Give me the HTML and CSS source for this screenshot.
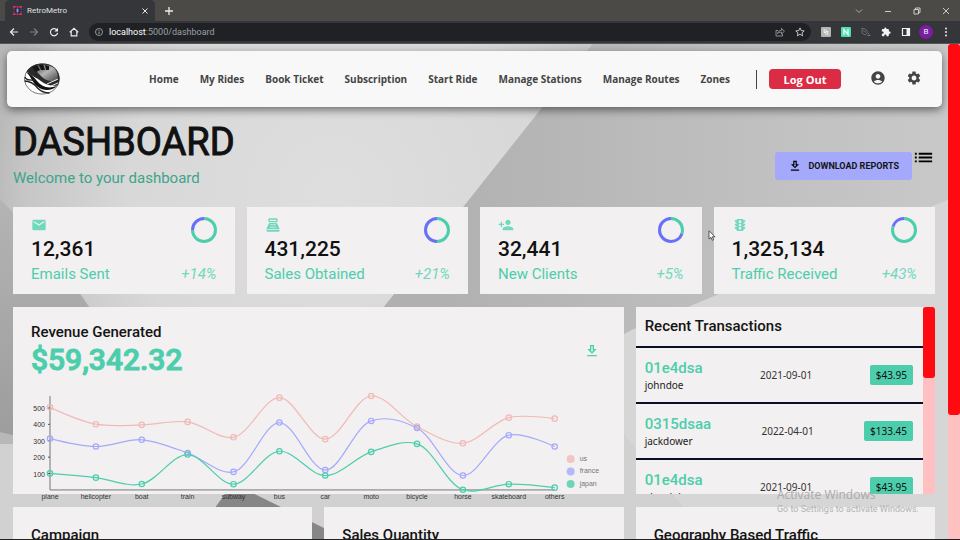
FILE: index.html
```html
<!DOCTYPE html>
<html lang="en">
<head>
<meta charset="utf-8">
<title>RetroMetro</title>
<link rel="stylesheet" href="styles.css">
</head>
<body>
<div class="browser">
  <div class="tabstrip">
    <div class="tab">
      <svg class="favicon" viewBox="0 0 10 10"><rect width="10" height="10" rx="1" fill="#1c2f55"/><g fill="none" stroke="#e8304f" stroke-width="2"><path d="M0 1h3M4 1h2M7 1h3M0 9h3M4 9h2M7 9h3M1 3v1M1 6v1M9 3v1M9 6v1"/></g><rect x="4" y="3" width="2" height="4" fill="#8fa3c4"/></svg>
      <span class="tab-title">RetroMetro</span>
      <button class="chrome-btn" aria-label="Close tab"><svg class="ic8" viewBox="0 0 8 8"><path d="M1.500 1.500l5 5M6.500 1.500l-5 5" stroke="#e8e8e8" fill="none"/></svg></button>
    </div>
    <button class="chrome-btn newtab" aria-label="New tab"><svg class="ic8" viewBox="0 0 8 8"><path d="M4 0v8M0 4h8" stroke="#eee" stroke-width="1.300" fill="none"/></svg></button>
    <div class="window-buttons">
      <button class="chrome-btn" aria-label="Search tabs"><svg class="ic8" viewBox="0 0 8 8"><path d="M1 2.500l3 3 3-3" stroke="#aaa" fill="none"/></svg></button>
      <button class="chrome-btn" aria-label="Minimize"><svg class="ic8" viewBox="0 0 8 8"><path d="M1 4.500h6" stroke="#ccc" fill="none"/></svg></button>
      <button class="chrome-btn" aria-label="Restore"><svg class="ic8" viewBox="0 0 8 8"><path d="M1 2.500h4.500v4.500H1zM2.500 2.500V1H7v4.500H5.500" stroke="#ccc" fill="none"/></svg></button>
      <button class="chrome-btn" aria-label="Close"><svg class="ic8" viewBox="0 0 8 8"><path d="M1 1l6 6M7 1L1 7" stroke="#ccc" fill="none"/></svg></button>
    </div>
  </div>
  <div class="toolbar">
    <button class="chrome-btn" aria-label="Back"><svg class="ic10" viewBox="0 0 10 10"><path d="M9 5H1.500M5 1.500L1.500 5 5 8.500" stroke="#e8eaed" stroke-width="1.200" fill="none"/></svg></button>
    <button class="chrome-btn" aria-label="Forward"><svg class="ic10" viewBox="0 0 10 10"><path d="M1 5h7.500M5 1.500L8.500 5 5 8.500" stroke="#7d7e81" stroke-width="1.200" fill="none"/></svg></button>
    <button class="chrome-btn" aria-label="Reload"><svg class="ic10" viewBox="0 0 10 10"><path d="M8.200 3.400A3.600 3.600 0 1 0 8.600 5.800" stroke="#e8eaed" stroke-width="1.200" fill="none"/><path d="M9 .8v3.700H5.300z" fill="#e8eaed"/></svg></button>
    <button class="chrome-btn" aria-label="Home"><svg class="ic10" viewBox="0 0 10 10"><path d="M.8 5.200L5 1.400l4.200 3.800M2.200 4.500v4.300h5.600V4.500" stroke="#e8eaed" stroke-width="1.200" fill="none"/></svg></button>
    <div class="omnibox">
      <svg class="ic8" viewBox="0 0 8 8"><circle cx="4" cy="4" r="3.500" fill="none" stroke="#b5b7ba" stroke-width=".8"/><path d="M4 3.500v2.500M4 2v.8" stroke="#b5b7ba" stroke-width=".9"/></svg>
      <span class="url"><b>localhost</b>:5000/dashboard</span>
      <svg class="ic10" viewBox="0 0 10 10"><path d="M3 3.500H1v5.500h6.500V7M2.500 6.500C3 4.500 4.500 3.400 6.500 3.400V1.400L9.400 4.200 6.500 7V5.200C4.800 5.200 3.500 5.500 2.500 6.500z" fill="none" stroke="#a5a7aa" stroke-width=".8"/></svg>
      <svg class="ic10" viewBox="0 0 10 10"><path d="M5 .9l1.200 2.700 3 .3-2.200 2 .6 2.900L5 7.300 2.400 8.800 3 5.900.8 3.900l3-.3z" fill="none" stroke="#d0d2d5" stroke-width=".9"/></svg>
    </div>
    <div class="extensions">
      <svg class="ic10" viewBox="0 0 10 10"><rect width="10" height="10" rx="1" fill="#b4b4b4"/><path d="M3.200 2v3.800M5 2.500v5.500M3 5.500h2M6.800 4v4M5 4.500h1.800" stroke="#eee" stroke-width="1" fill="none"/></svg>
      <svg class="ic10" viewBox="0 0 10 10"><rect width="10" height="10" rx="1" fill="#4fe0b0"/><path d="M3 7.700V2.700l4 4.700V2.300" stroke="#fff" stroke-width="1.300" fill="none"/></svg>
      <svg class="ic10" viewBox="0 0 10 10"><path d="M1 1l4 1.500 1.500 3-2.500 2.500-3-2zM2 3.500l3 2M6 8.500h3.500M7 6l1.500 2" stroke="#707276" stroke-width=".9" fill="none"/></svg>
      <svg class="ic10" viewBox="0 0 24 24"><path fill="#f1f3f4" d="M20.500 11H19V7c0-1.100-.9-2-2-2h-4V3.500C13 2.120 11.880 1 10.500 1S8 2.120 8 3.500V5H4c-1.100 0-1.990.9-1.990 2v3.800H3.500c1.490 0 2.700 1.210 2.700 2.700s-1.210 2.700-2.700 2.700H2V20c0 1.100.9 2 2 2h3.800v-1.500c0-1.490 1.210-2.700 2.700-2.700s2.700 1.210 2.700 2.700V22H17c1.100 0 2-.9 2-2v-4h1.500c1.380 0 2.500-1.120 2.500-2.500S21.880 11 20.500 11z"/></svg>
      <svg class="ic10" viewBox="0 0 10 10"><path d="M1.500 1.500h7v7h-7z" stroke="#f1f3f4" stroke-width="1.200" fill="none"/><path d="M5.500 1.500h3v7h-3z" fill="#f1f3f4"/></svg>
      <span class="profile">B</span>
      <svg class="ic10" viewBox="0 0 10 10"><g fill="#e8eaed"><circle cx="5" cy="1.500" r="1"/><circle cx="5" cy="5" r="1"/><circle cx="5" cy="8.500" r="1"/></g></svg>
    </div>
  </div>

  <div class="viewport">
    <svg class="backdrop" viewBox="0 0 948 495" preserveAspectRatio="none" aria-hidden="true">
      <defs>
        <radialGradient id="light" gradientUnits="userSpaceOnUse" cx="330" cy="150" r="340"><stop offset="0" stop-color="#dedede"/><stop offset=".6" stop-color="#d8d8d8"/><stop offset=".9" stop-color="#c6c6c6"/><stop offset="1" stop-color="#b8b8b8"/></radialGradient>
        <linearGradient id="mid" gradientUnits="userSpaceOnUse" x1="420" y1="100" x2="948" y2="100"><stop offset="0" stop-color="#b0b0b0"/><stop offset=".5" stop-color="#bdbdbd"/><stop offset="1" stop-color="#c9c9c9"/></linearGradient>
        <linearGradient id="dim" x1="0" y1="0" x2="0" y2="1"><stop offset="0" stop-color="#b4b4b4"/><stop offset="1" stop-color="#9c9c9c"/></linearGradient>
      </defs>
      <rect width="948" height="495" fill="#d1d1d1"/>
      <path d="M0 0H585L370 277 300 400H0z" fill="url(#light)"/>
      <path d="M585 0H948V151L624 286 560 320 350 300z" fill="url(#mid)"/>
      <path d="M948 151V495H700L560 320 624 286z" fill="#d6d6d6"/>
      <path d="M0 155L12 168 80 251 180 400 12 391 0 388z" fill="url(#dim)"/>
      <path d="M225 446H243L324 486V495H190z" fill="#868686"/>
    </svg>

    <div class="page">
      <header class="navbar">
        <a class="logo" href="#" aria-label="RetroMetro">
          <svg viewBox="0 0 38 34"><defs><linearGradient id="train" x1="0" y1="0" x2="1" y2="1"><stop offset="0" stop-color="#333"/><stop offset=".5" stop-color="#b5b5b5"/><stop offset="1" stop-color="#444"/></linearGradient></defs>
            <ellipse cx="19" cy="17" rx="17.500" ry="15" fill="#fff" stroke="#555" stroke-width=".8"/>
            <path d="M3.500 9.500C7 4 13 1.500 20 1.500c9 0 16 6 16.500 14 0 4-1 6-2 8-6 1-12-1-16-4C14 16 9 14 3.500 9.500z" fill="#2a2a2a"/>
            <path d="M10 5c7-4 16-3 21 1 4 4 5 9 2 13-4 1-10 0-14-4-3-3-6-6-9-10z" fill="url(#train)"/>
            <path d="M9 5l5-2 3 5-4 2zM16 3l4-1 2 6-4 0zM22 3l4 1 0 4-3 0z" fill="#151515"/>
            <path d="M3 10c4 1 8 5 11 9 5 6 11 8 20 5-5 5-14 5-19 1C9 21 9 15 3 10z" fill="#111"/>
            <path d="M2 15c1 4 6 3 10 3M1.500 19c5 0 9 2 13 7 4 4 8 5 12 5" fill="none" stroke="#222" stroke-width="1.300"/>
            <path d="M24 22l11-5M28 24l7-3" stroke="#eee" stroke-width="1" fill="none"/>
          </svg>
        </a>
        <nav class="links">
          <a href="#">Home</a><a href="#">My Rides</a><a href="#">Book Ticket</a><a href="#">Subscription</a><a href="#">Start Ride</a><a href="#">Manage Stations</a><a href="#">Manage Routes</a><a href="#">Zones</a>
        </nav>
        <span class="divider"></span>
        <button class="logout">Log Out</button>
        <div class="nav-icons">
          <button class="icon-btn" aria-label="Account"><svg viewBox="0 0 24 24"><path d="M12 2C6.480 2 2 6.480 2 12s4.480 10 10 10 10-4.480 10-10S17.520 2 12 2zm0 4c1.930 0 3.500 1.570 3.500 3.500S13.930 13 12 13s-3.500-1.570-3.500-3.500S10.070 6 12 6zm0 14c-2.030 0-4.430-.82-6.140-2.880C7.550 15.800 9.680 15 12 15s4.450.8 6.140 2.120C16.430 19.180 14.030 20 12 20z"/></svg></button>
          <button class="icon-btn" aria-label="Settings"><svg viewBox="0 0 24 24"><path d="M19.140 12.940c.04-.3.06-.61.06-.94 0-.32-.02-.64-.07-.94l2.030-1.580c.18-.14.23-.41.12-.61l-1.920-3.320c-.12-.22-.37-.29-.59-.22l-2.390.96c-.5-.38-1.030-.7-1.620-.94l-.36-2.540c-.04-.24-.24-.41-.48-.41h-3.840c-.24 0-.43.17-.47.41l-.36 2.540c-.59.24-1.130.57-1.620.94l-2.390-.96c-.22-.08-.47 0-.59.22L2.740 8.870c-.12.21-.08.47.12.61l2.030 1.580c-.05.3-.09.63-.09.94s.02.64.07.94l-2.030 1.580c-.18.14-.23.41-.12.61l1.920 3.320c.12.22.37.29.59.22l2.390-.96c.5.38 1.030.7 1.620.94l.36 2.540c.05.24.24.41.48.41h3.840c.24 0 .44-.17.47-.41l.36-2.540c.59-.24 1.130-.56 1.620-.94l2.390.96c.22.08.47 0 .59-.22l1.920-3.320c.12-.22.07-.47-.12-.61l-2.010-1.580zM12 15.600c-1.980 0-3.600-1.620-3.600-3.600s1.620-3.600 3.600-3.600 3.600 1.620 3.600 3.600-1.620 3.600-3.600 3.600z"/></svg></button>
        </div>
      </header>

      <main class="content">
        <div class="heading">
          <div>
            <h1>DASHBOARD</h1>
            <p class="welcome">Welcome to your dashboard</p>
          </div>
          <div class="heading-actions">
            <button class="download"><svg viewBox="0 0 24 24"><path d="M19 9h-4V3H9v6H5l7 7 7-7zm-8 2V5h2v6h1.170L12 13.170 9.830 11H11zm-6 7h14v2H5z"/></svg>DOWNLOAD REPORTS</button>
            <button class="menu-btn" aria-label="Menu"><svg viewBox="0 0 24 24"><path d="M3 13h2v-2H3v2zm0 4h2v-2H3v2zm0-8h2V7H3v2zm4 4h14v-2H7v2zm0 4h14v-2H7v2zM7 7v2h14V7H7z"/></svg></button>
          </div>
        </div>

        <div class="grid">
          <section class="card stat">
            <div class="stat-row">
              <div><svg class="stat-icon" viewBox="0 0 24 24"><path d="M20 4H4c-1.100 0-1.990.9-1.990 2L2 18c0 1.100.9 2 2 2h16c1.100 0 2-.9 2-2V6c0-1.100-.9-2-2-2zm0 4l-8 5-8-5V6l8 5 8-5v2z"/></svg><h2>12,361</h2></div>
              <svg class="ring" viewBox="0 0 26 26"><circle cx="13" cy="13" r="11.500" pathLength="100" class="ring-base" stroke-dasharray="0 75 25"/><circle cx="13" cy="13" r="11.500" pathLength="100" class="ring-part" stroke-dasharray="75 100"/></svg>
            </div>
            <div class="stat-row stat-foot"><span>Emails Sent</span><em>+14%</em></div>
          </section>
          <section class="card stat">
            <div class="stat-row">
              <div><svg class="stat-icon" viewBox="0 0 24 24"><path fill-rule="evenodd" d="M17 2H7c-1.100 0-2 .9-2 2v2c0 1.100.9 2 2 2h10c1.100 0 2-.9 2-2V4c0-1.100-.9-2-2-2zm0 4H7V4h10v2zm3 16H4c-1.100 0-2-.9-2-2v-1h20v1c0 1.100-.9 2-2 2zm-1.470-11.810C18.210 9.470 17.490 9 16.700 9H7.300c-.79 0-1.510.47-1.830 1.190L2 18h20l-3.470-7.810zM8 11h2v1H8zM11 11h2v1h-2zM14 11h2v1h-2zM8 13h2v1H8zM11 13h2v1h-2zM14 13h2v1h-2zM8 15h2v1H8zM11 15h2v1h-2zM14 15h2v1h-2z"/></svg><h2>431,225</h2></div>
              <svg class="ring" viewBox="0 0 26 26"><circle cx="13" cy="13" r="11.500" pathLength="100" class="ring-base" stroke-dasharray="0 50 50"/><circle cx="13" cy="13" r="11.500" pathLength="100" class="ring-part" stroke-dasharray="50 100"/></svg>
            </div>
            <div class="stat-row stat-foot"><span>Sales Obtained</span><em>+21%</em></div>
          </section>
          <section class="card stat">
            <div class="stat-row">
              <div><svg class="stat-icon" viewBox="0 0 24 24"><path d="M15 12c2.210 0 4-1.790 4-4s-1.790-4-4-4-4 1.790-4 4 1.790 4 4 4zm-9-2V7H4v3H1v2h3v3h2v-3h3v-2H6zm9 4c-2.670 0-8 1.340-8 4v2h16v-2c0-2.660-5.330-4-8-4z"/></svg><h2>32,441</h2></div>
              <svg class="ring" viewBox="0 0 26 26"><circle cx="13" cy="13" r="11.500" pathLength="100" class="ring-base" stroke-dasharray="0 30 70"/><circle cx="13" cy="13" r="11.500" pathLength="100" class="ring-part" stroke-dasharray="30 100"/></svg>
            </div>
            <div class="stat-row stat-foot"><span>New Clients</span><em>+5%</em></div>
          </section>
          <section class="card stat">
            <div class="stat-row">
              <div><svg class="stat-icon" viewBox="0 0 24 24"><path d="M20 10h-3V8.860c1.720-.45 3-2 3-3.860h-3V4c0-.55-.45-1-1-1H8c-.55 0-1 .45-1 1v1H4c0 1.860 1.280 3.410 3 3.860V10H4c0 1.860 1.280 3.410 3 3.860V15H4c0 1.860 1.280 3.410 3 3.860V20c0 .55.45 1 1 1h8c.55 0 1-.45 1-1v-1.140c1.720-.45 3-2 3-3.860h-3v-1.140c1.720-.45 3-2 3-3.860zm-8 9c-1.110 0-2-.9-2-2s.89-2 2-2c1.100 0 2 .9 2 2s-.89 2-2 2zm0-5c-1.110 0-2-.9-2-2s.89-2 2-2c1.100 0 2 .9 2 2s-.89 2-2 2zm0-5c-1.110 0-2-.9-2-2s.89-2 2-2c1.100 0 2 .89 2 2s-.89 2-2 2z"/></svg><h2>1,325,134</h2></div>
              <svg class="ring" viewBox="0 0 26 26"><circle cx="13" cy="13" r="11.500" pathLength="100" class="ring-base" stroke-dasharray="0 80 20"/><circle cx="13" cy="13" r="11.500" pathLength="100" class="ring-part" stroke-dasharray="80 100"/></svg>
            </div>
            <div class="stat-row stat-foot"><span>Traffic Received</span><em>+43%</em></div>
          </section>

          <section class="card revenue">
            <div class="revenue-head">
              <div><h3>Revenue Generated</h3><p class="amount">$59,342.32</p></div>
              <button class="save" aria-label="Download chart"><svg viewBox="0 0 24 24"><path d="M19 9h-4V3H9v6H5l7 7 7-7zm-8 2V5h2v6h1.170L12 13.170 9.830 11H11zm-6 7h14v2H5z"/></svg></button>
            </div>
            <svg class="chart" id="chart" viewBox="0 0 611 116" role="img" aria-label="Revenue by transport"></svg>
          </section>

          <section class="card transactions">
            <div class="list">
              <h3>Recent Transactions</h3>
              <div class="txn"><div><strong>01e4dsa</strong><span>johndoe</span></div><time>2021-09-01</time><b class="price">$43.95</b></div>
              <div class="txn"><div><strong>0315dsaa</strong><span>jackdower</span></div><time>2022-04-01</time><b class="price">$133.45</b></div>
              <div class="txn"><div><strong>01e4dsa</strong><span>aberdohnny</span></div><time>2021-09-01</time><b class="price">$43.95</b></div>
            </div>
            <div class="track"><div class="thumb thumb-list"></div></div>
          </section>

          <section class="card small"><h3>Campaign</h3></section>
          <section class="card small"><h3>Sales Quantity</h3></section>
          <section class="card small"><h3>Geography Based Traffic</h3></section>
        </div>
      </main>
    </div>
    <div class="track"><div class="thumb thumb-page"></div></div>
  </div>
</div>
<div class="watermark"><p class="wm-title">Activate Windows</p><p>Go to Settings to activate Windows.</p></div>
<svg class="cursor" viewBox="0 0 8 12" aria-hidden="true"><path d="M1 .8v8.200l2-1.700 1.300 3 1.300-.6-1.300-2.900H7z" fill="#fff" stroke="#333" stroke-width=".8"/></svg>
<script src="chart.js"></script>
</body>
</html>
```
FILE: styles.css
```css
* { box-sizing: border-box; }
body { margin: 0; font-family: Roboto, sans-serif; color: #111; overflow: hidden; background: #35363a; }
h1, h2, h3, p { margin: 0; font-weight: 500; }
button { border: 0; padding: 0; background: none; font: inherit; color: inherit; cursor: pointer; }
svg { display: block; flex: none; }
a { color: inherit; text-decoration: none; }

.browser { display: flex; flex-direction: column; height: 100vh; border-bottom: 1px solid #222; }
.chrome-btn { display: flex; }
.ic8 { width: 8px; height: 8px; }
.ic10 { width: 10px; height: 10px; }

.tabstrip { display: flex; align-items: center; height: 21px; padding-left: 5px; background: #4b4a47; }
.tab { display: flex; align-items: center; gap: 5px; width: 150px; height: 21px; padding: 0 6px 0 8px; border-radius: 5px 5px 0 0; background: #35363a; color: #dfe1e5; }
.favicon { width: 9px; height: 9px; }
.tab-title { flex: 1; font-size: 8px; }
.newtab { margin-left: 10px; }
.window-buttons { display: flex; gap: 21px; margin-left: auto; padding-right: 10px; }

.toolbar { display: flex; align-items: center; gap: 10px; height: 23px; padding: 0 9px; background: #35363a; border-bottom: 1px solid #55565a; }
.omnibox { flex: 1; display: flex; align-items: center; gap: 10px; height: 18px; padding: 0 6px; border-radius: 9px; background: #202124; }
.url { flex: 1; margin-left: -4px; font-size: 9px; color: #9aa0a6; }
.url b { font-weight: 400; color: #fff; }
.extensions { display: flex; align-items: center; gap: 10px; }
.profile { width: 14px; height: 14px; margin: 0 -2px; border-radius: 50%; background: #7b1fa2; color: #eee; font-size: 8px; line-height: 14px; text-align: center; }

.viewport { position: relative; flex: 1; min-height: 0; display: flex; overflow: hidden; background: #d1d1d1; }
.backdrop { position: absolute; inset: 0; width: 100%; height: 100%; }
.page { position: relative; flex: 1; min-width: 0; }
.track { position: relative; flex: none; width: 12px; background: #ffc0c2; }
.thumb { border-radius: 3px; background: #ff0a10; }
.thumb-page { height: 75%; }
.thumb-list { height: 38%; }

.navbar { display: flex; align-items: center; height: 56px; margin: 7px 6px 0 7px; padding: 0 20px 0 16px; border-radius: 5px; background: #f8f8f8; box-shadow: 0 3px 8px rgba(0, 0, 0, .5); color: #444; }
.logo svg { width: 38px; height: 34px; }
.links { display: flex; gap: 21px; margin-left: auto; font: 700 10px "Open Sans", sans-serif; }
.divider { width: 1px; height: 19px; margin: 0 12px 0 26px; background: #444; }
.logout { width: 72px; height: 20px; border-radius: 4px; background: #dc2c45; color: #fff; font: 700 11px "Open Sans", sans-serif; }
.nav-icons { display: flex; gap: 20px; margin-left: 29px; padding-bottom: 3px; }
.icon-btn svg { width: 16px; height: 16px; fill: #444; }

.content { padding: 11px 13px 0; }
.heading { display: flex; justify-content: space-between; height: 89px; }
h1 { font-size: 38px; line-height: 49px; -webkit-text-stroke: 1px; font-weight: 400; }
.welcome { margin-top: 1px; font-size: 15px; line-height: 20px; font-weight: 400; color: #3da58a; }
.heading-actions { display: flex; align-items: flex-start; padding-top: 34px; }
.download { display: flex; align-items: center; gap: 7px; height: 28px; padding: 0 13px; border-radius: 3px; background: #a4a9fc; color: #141414; font-size: 9px; font-weight: 700; }
.download svg { width: 14px; height: 14px; }
.menu-btn svg { width: 23px; height: 23px; margin: -6px 0 0; }

.grid { display: grid; grid-template-columns: repeat(12, minmax(0, 1fr)); gap: 13px 12px; }
.card { background: #f2f0f0; }
h3 { font-size: 15px; line-height: 18px; color: #141414; }

.stat { grid-column: span 3; height: 87px; padding: 10px 18px 0; }
.stat-row { display: flex; justify-content: space-between; }
.stat-icon { width: 16px; height: 16px; fill: #70d8bd; }
.stat h2 { font-size: 21px; line-height: 32px; color: #111; }
.ring { width: 26px; height: 26px; fill: none; stroke-width: 3; }
.ring circle { transform: rotate(-90deg); transform-origin: 50% 50%; }
.ring-base { stroke: #6870fa; }
.ring-part { stroke: #4cceac; }
.stat-foot { font-size: 15px; line-height: 18px; color: #4cceac; }
.stat-foot em { color: #70d8bd; }

.revenue { grid-column: span 8; height: 187px; padding-top: 16px; }
.revenue-head { display: flex; justify-content: space-between; align-items: center; padding: 0 24px 0 18px; }
.amount { font-size: 30px; line-height: 37px; color: #4cceac; -webkit-text-stroke: 1px; }
.save svg { width: 16px; height: 16px; fill: #4cceac; }
.chart { width: 100%; height: auto; margin-top: 12px; overflow: visible; }
.chart text { font: 7px "Liberation Sans", sans-serif; fill: #333; }
.chart .legend { fill: #777; }

.transactions { grid-column: span 4; display: flex; height: 187px; overflow: hidden; }
.list { flex: 1; }
.list h3 { padding: 10px 9px 11px; border-bottom: 2px solid #0a0f28; }
.txn { display: flex; align-items: center; justify-content: space-between; height: 56px; padding: 0 10px 0 9px; border-bottom: 2px solid #0a0f28; }
.txn div { display: flex; flex-direction: column; }
.txn strong { font-size: 15px; line-height: 19px; font-weight: 500; color: #4cceac; }
.txn span { font: 10px/14px "Noto Sans", sans-serif; color: #222; }
.txn time { font: 10px/14px "Noto Sans", sans-serif; color: #333; }
.price { padding: 3px 6px; border-radius: 2px; background: #4cceac; font: 10px/14px "Noto Sans", sans-serif; color: #111; }

.small { grid-column: span 4; height: 187px; padding: 19px 18px; }

.watermark { position: absolute; right: 41px; bottom: 24px; font-size: 9px; line-height: 13px; color: #b4b4b4; pointer-events: none; }
.watermark p { font-weight: 400; }
.watermark .wm-title { font: 12px/17px "Open Sans", sans-serif; color: #aaa; }
.cursor { position: absolute; left: 708px; top: 230px; width: 8px; height: 12px; }
```
FILE: chart.js
```js
const modes = ["plane", "helicopter", "boat", "train", "subway", "bus", "car", "moto", "bicycle", "horse", "skateboard", "others"];
const series = [
  { name: "japan", color: "#4cceac", values: [101, 75, 36, 216, 35, 236, 88, 232, 281, 1, 35, 14] },
  { name: "france", color: "#a4a9fc", values: [212, 190, 270, 9, 75, 175, 33, 189, 97, 87, 299, 251] },
  { name: "us", color: "#f1b9b7", values: [191, 136, 91, 190, 211, 152, 189, 152, 8, 197, 107, 170] }
];
const left = 37, right = 542, base = 100, perUnit = 0.164;
const x = i => left + (right - left) * i / (modes.length - 1);
const y = v => base - v * perUnit;

// Centripetal Catmull-Rom spline through the points.
function spline(p) {
  let d = `M${p[0]}`;
  for (let i = 0; i < p.length - 1; i++) {
    const p0 = p[i - 1] || p[i], p1 = p[i], p2 = p[i + 1], p3 = p[i + 2] || p2;
    const dist = (a, b) => Math.hypot(a[0] - b[0], a[1] - b[1]);
    const d1 = dist(p0, p1), d2 = dist(p1, p2), d3 = dist(p2, p3);
    const s1 = Math.sqrt(d1), s2 = Math.sqrt(d2), s3 = Math.sqrt(d3);
    const c1 = p1.map((v, k) => d1 ? (v * (2 * d1 + 3 * s1 * s2 + d2) - p0[k] * d2 + p2[k] * d1) / (3 * s1 * (s1 + s2)) : v);
    const c2 = p2.map((v, k) => d3 ? (v * (2 * d3 + 3 * s3 * s2 + d2) + p1[k] * d3 - p3[k] * d2) / (3 * s3 * (s3 + s2)) : v);
    d += `C${c1} ${c2} ${p2}`;
  }
  return d;
}

let out = `<path d="M${left} 6V${base}H${right}" fill="none" stroke="#777"/>`;
for (let v = 100; v <= 500; v += 100) {
  out += `<path d="M${left - 2} ${y(v)}h2" stroke="#555"/><text x="${left - 5}" y="${y(v) + 3}" text-anchor="end">${v}</text>`;
}
modes.forEach((m, i) => { out += `<text x="${x(i)}" y="109" text-anchor="middle">${m}</text>`; });

const totals = modes.map(() => 0);
const lines = series.map(s => ({ ...s, points: s.values.map((v, i) => [x(i), y(totals[i] += v)]) })).reverse();
lines.forEach(l => { out += `<path d="${spline(l.points)}" fill="none" stroke="${l.color}" stroke-width="1.200"/>`; });
lines.forEach((l, row) => {
  l.points.forEach(([cx, cy]) => { out += `<circle cx="${cx}" cy="${cy}" r="2.700" fill="none" stroke="${l.color}" stroke-width="1.200"/>`; });
  const ly = 69 + row * 12.5;
  out += `<circle cx="558" cy="${ly}" r="4" fill="${l.color}" opacity=".8"/><text class="legend" x="567" y="${ly + 2}">${l.name}</text>`;
});
document.getElementById("chart").innerHTML = out;
```
